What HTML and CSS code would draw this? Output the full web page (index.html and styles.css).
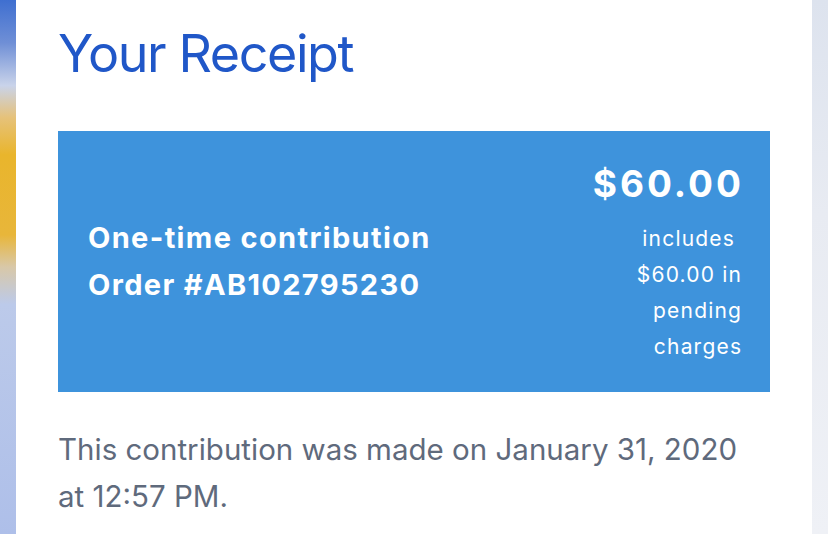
FILE: index.html
```html
<!DOCTYPE html>
<html lang="en">
<head>
<meta charset="utf-8">
<title>Your Receipt</title>
<link rel="stylesheet" href="styles.css">
</head>
<body>
<div class="page">
  <div class="side side-left"></div>
  <main class="card">
    <h1 class="title">Your Receipt</h1>
    <section class="summary">
      <div class="summary-info">
        <div class="summary-line">One-time contribution</div>
        <div class="summary-line">Order #AB102795230</div>
      </div>
      <div class="summary-amount">
        <div class="amount">$60.00</div>
        <div class="amount-note">includes&nbsp; $60.00 in pending charges</div>
      </div>
    </section>
    <p class="made-on">This contribution was made on January 31, 2020 at 12:57 PM.</p>
  </main>
  <div class="side side-right"></div>
</div>
</body>
</html>
```

FILE: styles.css
```css
html, body {
  margin: 0;
  padding: 0;
  height: 100%;
  overflow: hidden;
}
body {
  font-family: Inter, "Noto Sans", "Liberation Sans", sans-serif;
  background: #ffffff;
}
.page {
  display: flex;
  height: 534px;
}
.side {
  flex: 0 0 auto;
}
.side-left {
  width: 16px;
  background: linear-gradient(180deg, #3f6fd0 0%, #6f8fd6 8%, #c9d3ea 16%, #e6c27a 22%, #e9b52c 29%, #e8b63a 44%, #d8c8a8 50%, #bccaea 57%, #aebfe9 100%);
}
.side-right {
  width: 16px;
  background: linear-gradient(180deg, #dde3ee 0%, #e8ebf2 40%, #eff1f6 100%);
}
.card {
  flex: 1 1 auto;
  padding: 0 42px;
  background: #ffffff;
}
.title {
  margin: 23px 0 0;
  font-size: 52px;
  line-height: 62px;
  font-weight: 400;
  color: #2057c8;
  letter-spacing: -1.4px;
}
.summary {
  margin-top: 46px;
  background: #3e93dc;
  color: #ffffff;
  display: flex;
  justify-content: space-between;
  align-items: center;
  padding: 30px 29px 27px 30px;
}
.summary-info {
  margin-bottom: 4px;
}
.summary-line {
  font-size: 29px;
  line-height: 47px;
  font-weight: 700;
  letter-spacing: 1.35px;
}
.summary-amount {
  width: 160px;
  text-align: right;
}
.amount {
  margin: 3px -3px 17px 0;
  font-size: 37px;
  line-height: 40px;
  font-weight: 700;
  letter-spacing: 3px;
}
.amount-note {
  margin-right: -1.2px;
  font-size: 21px;
  line-height: 36px;
  font-weight: 400;
  letter-spacing: 1.2px;
}
.made-on {
  margin: 34px 0 0;
  padding-right: 20px;
  font-size: 29.5px;
  line-height: 47px;
  color: #5f6a7c;
}
```
